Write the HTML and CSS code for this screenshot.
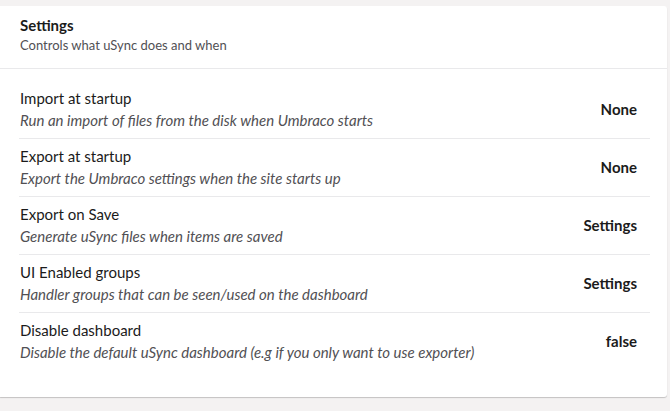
FILE: index.html
```html
<!DOCTYPE html>
<html lang="en">
<head>
    <meta charset="UTF-8">
    <meta name="viewport" content="width=device-width, initial-scale=1.0">
    <title>uSync Settings</title>
    <link rel="stylesheet" href="styles.css">
</head>
<body>
    <div class="page">
        <div class="box">
            <div class="box-header">
                <h2>Settings</h2>
                <p>Controls what uSync does and when</p>
            </div>
            <div class="box-content">
                <ul class="settings">
                    <li class="setting">
                        <div class="setting-info">
                            <h4>Import at startup</h4>
                            <small>Run an import of files from the disk when Umbraco starts</small>
                        </div>
                        <div class="setting-value">None</div>
                    </li>
                    <li class="setting">
                        <div class="setting-info">
                            <h4>Export at startup</h4>
                            <small>Export the Umbraco settings when the site starts up</small>
                        </div>
                        <div class="setting-value">None</div>
                    </li>
                    <li class="setting">
                        <div class="setting-info">
                            <h4>Export on Save</h4>
                            <small>Generate uSync files when items are saved</small>
                        </div>
                        <div class="setting-value">Settings</div>
                    </li>
                    <li class="setting">
                        <div class="setting-info">
                            <h4>UI Enabled groups</h4>
                            <small>Handler groups that can be seen/used on the dashboard</small>
                        </div>
                        <div class="setting-value">Settings</div>
                    </li>
                    <li class="setting">
                        <div class="setting-info">
                            <h4>Disable dashboard</h4>
                            <small>Disable the default uSync dashboard (e.g if you only want to use exporter)</small>
                        </div>
                        <div class="setting-value">false</div>
                    </li>
                </ul>
            </div>
        </div>
    </div>
</body>
</html>
```

FILE: styles.css
```css
body {
    margin: 0;
    background-color: #f4f2f2;
    font-family: Lato, "Open Sans", sans-serif;
    color: #1b1b1b;
}

.page {
    padding: 6px 3px 13px 0;
}

.box {
    background-color: #fff;
    border-radius: 0 3px 3px 0;
    box-shadow: 0 1px 1px rgba(0, 0, 0, 0.2);
}

.box-header {
    padding: 9px 20px 13px;
    border-bottom: 1px solid #e9e9eb;
}

.box-header h2 {
    margin: 0;
    font-size: 15px;
    font-weight: 700;
    line-height: 20px;
}

.box-header p {
    margin: 0;
    font-size: 13px;
    line-height: 20px;
    color: #515054;
}

.box-content {
    padding: 12px 17px 27px 19px;
}

.settings {
    list-style: none;
    margin: 0;
    padding: 0;
}

.setting {
    display: flex;
    align-items: center;
    justify-content: space-between;
    padding: 7px 13px 8px 1px;
    border-bottom: 1px solid #e9e9eb;
}

.setting:last-child {
    border-bottom: none;
}

.setting-info h4 {
    margin: 0 0 2px;
    font-size: 15px;
    font-weight: 400;
    line-height: 20px;
}

.setting-info small {
    display: block;
    font-size: 15px;
    font-style: italic;
    line-height: 20px;
    color: #515054;
}

.setting-value {
    font-size: 15px;
    font-weight: 700;
}
```
